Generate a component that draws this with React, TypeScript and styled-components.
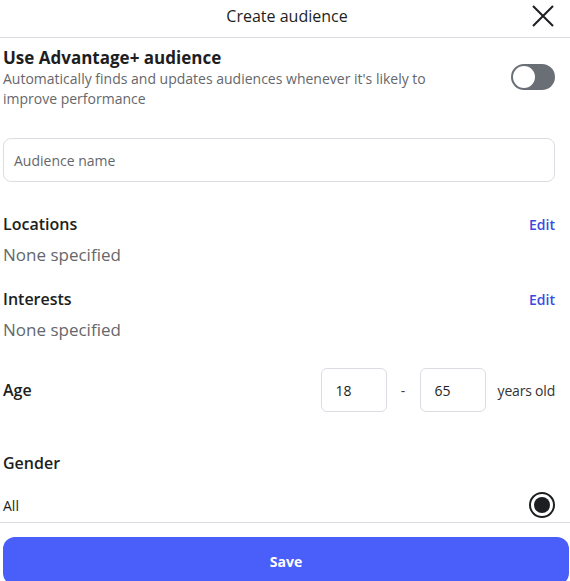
import React from "react";
import styled, { createGlobalStyle } from "styled-components";

const Global = createGlobalStyle`
  body { margin: 0; background: #fff; font-family: "Open Sans", "Noto Sans", sans-serif; color: #1c1e21; }
`;

const Page = styled.div`width: 570px; display: flex; flex-direction: column;`;
const Header = styled.div`
  height: 38px; border-bottom: 1px solid #dadde1; position: relative;
  display: flex; align-items: flex-start; justify-content: center;
  font-size: 16px; box-sizing: border-box; padding: 5px 0 0 4px;
`;
const Close = styled.button`
  position: absolute; right: 14px; top: 3px; width: 26px; height: 26px;
  border: none; background: none; padding: 0; display: flex;
`;
const Body = styled.div`padding: 8px 15px 0 3px; display: flex; flex-direction: column;`;
const AdvRow = styled.div`display: flex; align-items: center; justify-content: space-between;`;
const AdvTitle = styled.div`font-size: 17px; font-weight: 700; line-height: 23px;`;
const AdvDesc = styled.div`font-size: 14px; color: #65676b; line-height: 20px; width: 450px;`;
const Toggle = styled.div`
  width: 44px; height: 26px; border-radius: 13px; background: #6a6e75;
  position: relative; flex-shrink: 0; margin-top: -2px;
  &::after { content: ""; position: absolute; left: 2px; top: 2px; width: 22px; height: 22px; border-radius: 50%; background: #fff; }
`;
const Input = styled.div`
  margin-top: 29px; height: 44px; border: 1px solid #dcdde3; border-radius: 8px; box-sizing: border-box;
  display: flex; align-items: center; padding-left: 10px; font-size: 14px; color: #65676b;
`;
const Section = styled.div<{ $mt: number }>`margin-top: ${p => p.$mt}px;`;
const SecHead = styled.div`display: flex; justify-content: space-between; align-items: center; height: 24px;`;
const Label = styled.div`font-size: 16px; font-weight: 600;`;
const Edit = styled.a`font-size: 14px; color: #3b4be0; font-weight: 600;`;
const None = styled.div`font-size: 17px; color: #65676b; margin-top: 7px; line-height: 24px;`;
const AgeRow = styled.div`display: flex; align-items: center; margin-top: 26px;`;
const Grow = styled.div`flex: 1;`;
const AgeBox = styled.div`
  width: 66px; height: 44px; border: 1px solid #dcdde3; border-radius: 6px; box-sizing: border-box;
  display: flex; align-items: center; padding-left: 14px; font-size: 14px;
`;
const Dash = styled.span`width: 33px; text-align: center; font-size: 14px; color: #444;`;
const Years = styled.span`font-size: 14px; margin-left: 12px; color: #333; letter-spacing: -0.2px;`;
const GenderRow = styled.div`display: flex; justify-content: space-between; align-items: center; margin-top: 18px; font-size: 14px;`;
const Radio = styled.div`
  width: 26px; height: 26px; border-radius: 50%; border: 2px solid #1c1e21; box-sizing: border-box;
  display: flex; align-items: center; justify-content: center;
  &::after { content: ""; width: 16px; height: 16px; border-radius: 50%; background: #1c1e21; }
`;
const Divider = styled.div`border-top: 1px solid #dadde1; margin-top: 4px;`;
const Footer = styled.div`padding: 14px 1px 0 3px;`;
const Save = styled.button`
  width: 566px; height: 48px; border: none; border-radius: 12px; background: #4a5ef9;
  color: #fff; font-weight: 700; font-size: 14px; font-family: inherit;
`;

export default function App() {
  return (
    <Page>
      <Global />
      <Header>
        Create audience
        <Close>
          <svg width="26" height="26" viewBox="0 0 26 26"><path d="M3 3L23 23M23 3L3 23" stroke="#1c1e21" strokeWidth="2" /></svg>
        </Close>
      </Header>
      <Body>
        <AdvRow>
          <div>
            <AdvTitle>Use Advantage+ audience</AdvTitle>
            <AdvDesc>Automatically finds and updates audiences whenever it's likely to improve performance</AdvDesc>
          </div>
          <Toggle />
        </AdvRow>
        <Input>Audience name</Input>
        <Section $mt={30}>
          <SecHead><Label>Locations</Label><Edit>Edit</Edit></SecHead>
          <None>None specified</None>
        </Section>
        <Section $mt={20}>
          <SecHead><Label>Interests</Label><Edit>Edit</Edit></SecHead>
          <None>None specified</None>
        </Section>
        <AgeRow>
          <Label>Age</Label>
          <Grow />
          <AgeBox>18</AgeBox>
          <Dash>-</Dash>
          <AgeBox>65</AgeBox>
          <Years>years old</Years>
        </AgeRow>
        <Section $mt={40}>
          <Label>Gender</Label>
        </Section>
        <GenderRow><span>All</span><Radio /></GenderRow>
      </Body>
      <Divider />
      <Footer><Save>Save</Save></Footer>
    </Page>
  );
}
